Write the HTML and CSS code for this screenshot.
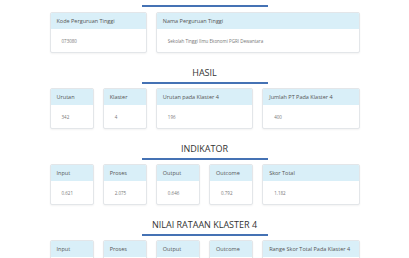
FILE: index.html
```html
<!DOCTYPE html>
<html lang="id">
<head>
  <meta charset="UTF-8">
  <meta name="viewport" content="width=device-width, initial-scale=1">
  <title>Profil Perguruan Tinggi</title>
  <link rel="stylesheet" href="styles.css">
</head>
<body>

<div class="container">
  <div class="underline first"></div>

  <div class="row">
    <div class="card span-4">
      <div class="card-head">Kode Perguruan Tinggi</div>
      <div class="card-body">073080</div>
    </div>
    <div class="card span-8">
      <div class="card-head">Nama Perguruan Tinggi</div>
      <div class="card-body">Sekolah Tinggi Ilmu Ekonomi PGRI Dewantara</div>
    </div>
  </div>

  <h3 class="section-title">HASIL</h3>
  <div class="underline"></div>
  <div class="row">
    <div class="card span-2">
      <div class="card-head">Urutan</div>
      <div class="card-body">342</div>
    </div>
    <div class="card span-2">
      <div class="card-head">Klaster</div>
      <div class="card-body">4</div>
    </div>
    <div class="card span-4">
      <div class="card-head">Urutan pada Klaster 4</div>
      <div class="card-body">196</div>
    </div>
    <div class="card span-4">
      <div class="card-head">Jumlah PT Pada Klaster 4</div>
      <div class="card-body">400</div>
    </div>
  </div>

  <h3 class="section-title">INDIKATOR</h3>
  <div class="underline"></div>
  <div class="row">
    <div class="card span-2">
      <div class="card-head">Input</div>
      <div class="card-body">0.621</div>
    </div>
    <div class="card span-2">
      <div class="card-head">Proses</div>
      <div class="card-body">2.075</div>
    </div>
    <div class="card span-2">
      <div class="card-head">Output</div>
      <div class="card-body">0.646</div>
    </div>
    <div class="card span-2">
      <div class="card-head">Outcome</div>
      <div class="card-body">0.792</div>
    </div>
    <div class="card span-4">
      <div class="card-head">Skor Total</div>
      <div class="card-body">1.182</div>
    </div>
  </div>

  <h3 class="section-title">NILAI RATAAN KLASTER 4</h3>
  <div class="underline"></div>
  <div class="row">
    <div class="card span-2">
      <div class="card-head">Input</div>
      <div class="card-body"></div>
    </div>
    <div class="card span-2">
      <div class="card-head">Proses</div>
      <div class="card-body"></div>
    </div>
    <div class="card span-2">
      <div class="card-head">Output</div>
      <div class="card-body"></div>
    </div>
    <div class="card span-2">
      <div class="card-head">Outcome</div>
      <div class="card-body"></div>
    </div>
    <div class="card span-4">
      <div class="card-head">Range Skor Total Pada Klaster 4</div>
      <div class="card-body"></div>
    </div>
  </div>
</div>

</body>
</html>
```

FILE: styles.css
```css
*, *::before, *::after {
  box-sizing: border-box;
}

body {
  font-family: "Open Sans", Arial, sans-serif;
  background-color: #ffffff;
  color: #333;
  margin: 0;
}

.container {
  width: 310px;
  margin: 0 auto;
}

.underline {
  width: 126px;
  height: 2px;
  margin: 3px auto 4px;
  background-color: #4572b4;
}

.underline.first {
  margin-top: 5px;
  margin-bottom: 5px;
}

.section-title {
  margin: 14px 0 0;
  font-size: 9px;
  line-height: 12px;
  font-weight: 400;
  text-align: center;
  color: #333;
}

.row {
  display: grid;
  grid-template-columns: repeat(12, 1fr);
  column-gap: 9px;
}

.span-2 { grid-column: span 2; }
.span-4 { grid-column: span 4; }
.span-8 { grid-column: span 8; }

.card {
  border: 1px solid #e3e6e9;
  border-radius: 2px;
  background: #fff;
  box-shadow: 0 1px 2px rgba(0,0,0,0.05);
  overflow: hidden;
}

.card-head {
  height: 16px;
  display: flex;
  align-items: center;
  padding: 0 6px;
  background-color: #d9eff8;
  font-size: 5.5px;
  color: #555;
  white-space: nowrap;
}

.card-body {
  height: 23px;
  display: flex;
  align-items: center;
  padding: 0 11px;
  font-size: 4.5px;
  color: #777;
  white-space: nowrap;
}
```
